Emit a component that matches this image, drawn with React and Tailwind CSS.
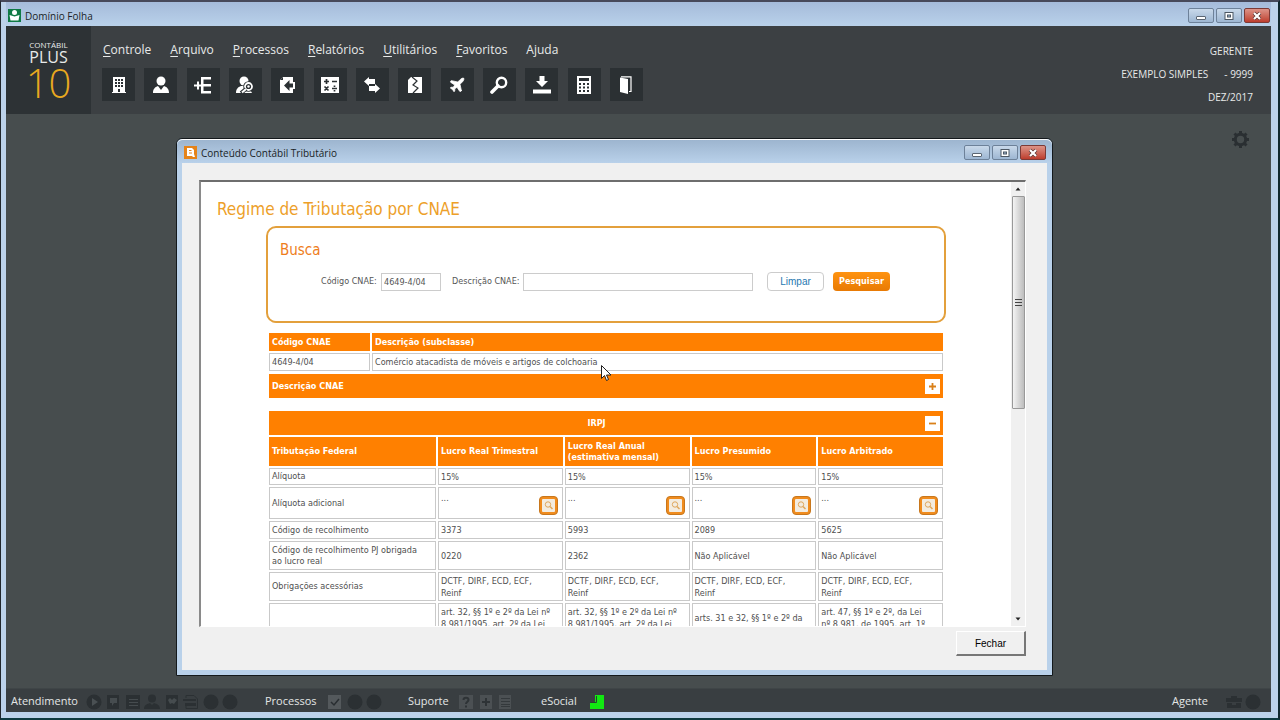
import React, { useState } from 'react';
import { Plane } from 'lucide-react';

const menus = [
    { label: 'Controle', key: true },
    { label: 'Arquivo', key: true },
    { label: 'Processos', key: true },
    { label: 'Relatórios', key: true },
    { label: 'Utilitários', key: true },
    { label: 'Favoritos', key: true },
    { label: 'Ajuda', key: false },
];

const DARK = '#2b3033';

// Toolbar glyphs, all on an 18x18 grid
const tools = [
    { name: 'Empresas', art: (
        <>
            <path d="M3 1h12v15h1v1H2v-1h1z" />
            <path fill={DARK} d="M5 3h2v2H5zM8 3h2v2H8zM11 3h2v2h-2zM5 6h2v2H5zM8 6h2v2H8zM11 6h2v2h-2zM5 9h2v2H5zM8 9h2v2H8zM11 9h2v2h-2zM8 13h2v3H8z" />
        </>
    ) },
    { name: 'Empregados', art: (
        <>
            <circle cx="9" cy="5" r="4.5" />
            <path d="M1 17c0-4 2-6 5-7l3 4 3-4c3 1 5 3 5 7z" />
        </>
    ) },
    { name: 'Lançamentos', art: (
        <path d="M7 1h10v2.500H9.500V8H17v2.500H9.500V15H17v2.500H7v-7H5v3H3v-3H0v-2h3v-3h2v3h2z" />
    ) },
    { name: 'Consulta de empregados', art: (
        <>
            <circle cx="8" cy="5" r="4.500" />
            <path d="M0 17c0-4 2-6 5-7h7l4 7z" />
            <circle cx="12.500" cy="10.500" r="3.500" fill="none" stroke={DARK} strokeWidth="3.500" />
            <circle cx="12.500" cy="10.500" r="3.500" fill={DARK} stroke="white" strokeWidth="1.800" />
            <path d="M10 13l-5 4" stroke={DARK} strokeWidth="4" />
            <path d="M10 13l-4 3.500" stroke="white" strokeWidth="2" />
            <circle cx="12.500" cy="10.500" r="1.200" />
        </>
    ) },
    { name: 'Importar', art: (
        <>
            <path d="M4 1h10v5h2v7h-2v4H1V4z" />
            <path fill={DARK} d="M1 4l3-3v3zM5 9.500l5.500-5.500v3.500H14v4h-3.500V15z" />
        </>
    ) },
    { name: 'Cálculo', art: (
        <>
            <path d="M0 1h18v16H0z" />
            <path stroke={DARK} strokeWidth="1.700" d="M3 5.500h5M5.500 3v5M11 5.500h5M3.500 10.500l4 4M7.500 10.500l-4 4M11 12.500h5M13.500 9.500v1.500M13.500 14v1.500" />
        </>
    ) },
    { name: 'Transferência', art: (
        <path d="M1 5.500L6 1v2h6v5H6v2zM17 12.500L12 17v-2H6v-5h6V8z" />
    ) },
    { name: 'Rescisão', art: (
        <>
            <path d="M5 1h11v16H2V4z" />
            <path fill="none" stroke={DARK} strokeWidth="1.200" d="M6 1l5 4-4 4 5 3-5 5" />
        </>
    ) },
    { name: 'Férias', art: <Plane size={18} fill="white" stroke="white" strokeWidth={1} /> },
    { name: 'Pesquisar', art: (
        <>
            <circle cx="11.500" cy="6.500" r="4.700" fill="none" stroke="white" strokeWidth="2.400" />
            <path d="M8 10l-6 6" stroke="white" strokeWidth="3.600" strokeLinecap="round" />
        </>
    ) },
    { name: 'Baixar', art: (
        <path d="M6.500 0h5v5H15l-6 6-6-6h3.500zM0 13.500h18v4H0z" />
    ) },
    { name: 'Calculadora', art: (
        <>
            <path d="M2 0h14v18H2z" />
            <path fill={DARK} d="M4 2h10v3H4zM4 7h2v2H4zM8 7h2v2H8zM12 7h2v2h-2zM4 10.500h2v2H4zM8 10.500h2v2H8zM12 10.500h2v2h-2zM4 14h2v2H4zM8 14h2v2H8zM12 14h2v2h-2z" />
        </>
    ) },
    { name: 'Sair', art: (
        <>
            <path d="M3 1.500l8 1.500v15l-8-2z" />
            <path fill="none" stroke="white" strokeWidth="1.200" d="M4 0.900h10v14.600h-2" />
        </>
    ) },
];

const columns = ['Lucro Real Trimestral', 'Lucro Real Anual\n(estimativa mensal)', 'Lucro Presumido', 'Lucro Arbitrado'];

const obligations = 'DCTF, DIRF, ECD, ECF,\nReinf';

const rows = [
    { label: 'Alíquota', height: 'h-[17px]', values: ['15%', '15%', '15%', '15%'] },
    { label: 'Alíquota adicional', height: 'h-8', detail: true, values: ['...', '...', '...', '...'] },
    { label: 'Código de recolhimento', height: 'h-[18px]', values: ['3373', '5993', '2089', '5625'] },
    { label: 'Código de recolhimento PJ obrigada\nao lucro real', height: 'h-[29px]', values: ['0220', '2362', 'Não Aplicável', 'Não Aplicável'] },
    { label: 'Obrigações acessórias', height: 'h-[29px]', values: [obligations, obligations, obligations, obligations] },
    { label: '', height: 'h-[30px]', values: ['art. 32, §§ 1º e 2º da Lei nº\n8.981/1995, art. 2º da Lei', 'art. 32, §§ 1º e 2º da Lei nº\n8.981/1995, art. 2º da Lei', 'arts. 31 e 32, §§ 1º e 2º da', 'art. 47, §§ 1º e 2º, da Lei\nnº 8.981, de 1995, art. 1º'] },
];

function WindowButtons() {
    const base = 'flex h-[15px] w-[26px] items-center justify-center rounded-[2px] border';
    return (
        <div className="flex gap-0.5">
            <button aria-label="Minimizar" className={`${base} border-[#6d8199] bg-gradient-to-b from-[#c9d9ea] to-[#9db6d2]`}>
                <svg width="10" height="10" viewBox="0 0 10 10"><rect x="0.500" y="5.500" width="9" height="3" rx="0.500" fill="white" stroke="#5b6673" /></svg>
            </button>
            <button aria-label="Maximizar" className={`${base} border-[#6d8199] bg-gradient-to-b from-[#c9d9ea] to-[#9db6d2]`}>
                <svg width="10" height="10" viewBox="0 0 10 10"><rect x="1" y="1.500" width="8" height="7" fill="white" stroke="#4d5864" /><rect x="3.500" y="4" width="3" height="2" fill="#9db6d2" stroke="#4d5864" /></svg>
            </button>
            <button aria-label="Fechar janela" className={`${base} border-[#7c3a36] bg-gradient-to-b from-[#dc9388] to-[#bd3c2d]`}>
                <svg width="10" height="10" viewBox="0 0 10 10"><path d="M2 2l6 6M8 2l-6 6" stroke="#5a3431" strokeWidth="3.600" /><path d="M2 2l6 6M8 2l-6 6" stroke="white" strokeWidth="2.200" /></svg>
            </button>
        </div>
    );
}

function Dot() {
    return <svg width="16" height="16" viewBox="0 0 16 16"><circle cx="8" cy="8" r="7.500" fill={DARK} /></svg>;
}

function StatusIcon({ children, fill = DARK }) {
    return <svg width="16" height="16" viewBox="0 0 16 16" fill={fill} stroke="none">{children}</svg>;
}

function StatusBar() {
    return (
        <footer className="flex h-6 shrink-0 items-center border-t border-[#3f4547] bg-[#393e41] pl-[5px] pr-[10px] pt-0.5 font-['Open_Sans',sans-serif] text-[11px] text-[#e4e6e6]">
            <span className="w-[75px]">Atendimento</span>
            <div className="mr-[27px] flex w-[152px] justify-between">
                <StatusIcon><circle cx="8" cy="8" r="7.500" /><path fill="#4a5053" d="M6 4l6 4-6 4z" /></StatusIcon>
                <StatusIcon><path d="M2 1h12v14H2z" /><path fill="#464c4f" d="M5 4h7v5H9l-2 3V9H5z" /></StatusIcon>
                <StatusIcon><path d="M1 1h14v14H1z" /><path stroke="#464c4f" d="M4 5.500h9M4 8.500h9M4 11.500h9" /></StatusIcon>
                <StatusIcon><circle cx="8" cy="4.500" r="4" /><path d="M0 15c0-4 3-5 6-6l2 2 2-2c3 1 6 2 6 6z" /></StatusIcon>
                <StatusIcon><path d="M2 1h12v14H2z" /><path fill="#464c4f" d="M4 6l2-2 2 2 2-2 3 2-3 4-2-1-2 1z" /></StatusIcon>
                <StatusIcon><path fill="none" stroke={DARK} d="M3 4V1.500h8L14.500 5v9.500H3V12" /><path d="M0 5h13v2H0zM2 9h11v3H2z" /></StatusIcon>
                <Dot />
                <Dot />
            </div>
            <span className="w-[62px]">Processos</span>
            <div className="mr-[26px] flex w-[55px] justify-between">
                <StatusIcon fill="#54595c"><path d="M1 1h13v14H1z" /><path fill="none" stroke="#292e31" strokeWidth="1.500" d="M4 8l3 3 5-6" /></StatusIcon>
                <Dot />
                <Dot />
            </div>
            <span className="w-[50px]">Suporte</span>
            <div className="mr-[28px] flex w-[55px] justify-between">
                <StatusIcon fill="#4b5053"><path d="M1 1h14v14H1z" /><path fill="none" stroke="#2e3336" strokeWidth="2" d="M5.500 6c0-3 5-3 5 0 0 1.500-2.500 2-2.500 4M8 11.500v2" /></StatusIcon>
                <StatusIcon fill="#4b5053"><path d="M2 1h12v14H2z" /><path stroke="#2e3336" strokeWidth="2" d="M4 8h8M8 4v8" /></StatusIcon>
                <StatusIcon fill="#4b5053"><path d="M2 1h12v14H2z" /><path stroke="#34393c" strokeWidth="1" d="M4 4.500h9M4 7.500h9M4 10.500h9M4 12.500h9" /></StatusIcon>
            </div>
            <span className="w-[48px]">eSocial</span>
            <StatusIcon fill="#12e812"><path d="M6 1h9v14H1V9h5z" /><path fill="none" stroke="#2a3f30" strokeWidth="1" d="M1.500 8.500h6V2" /></StatusIcon>
            <div className="ml-auto flex items-center">
                <span className="w-[54px]">Agente</span>
                <div className="flex gap-[3px]">
                    <StatusIcon><path d="M5 2h6v2h5v4H0V4h5zM1 9h5v2h4V9h5v5H1z" /></StatusIcon>
                    <Dot />
                </div>
            </div>
        </footer>
    );
}

function Header() {
    return (
        <header className="flex h-[88px] shrink-0 bg-[#3c4043] text-[#e8eaea]">
            <div className="flex w-[85px] flex-col items-center bg-[#2d3235] pt-[14px] font-['Open_Sans',sans-serif]">
                <span className="text-[8px] leading-[10px]">CONTÁBIL</span>
                <span className="text-[16px] leading-[14px]">PLUS</span>
                <span className="text-[40px] font-light leading-[38px] text-[#e9a91f]">10</span>
            </div>
            <div className="flex flex-col pl-[11px] pt-[14px]">
                <nav className="flex gap-[19px] pl-px font-['Open_Sans',sans-serif] text-[12px] leading-5">
                    {menus.map((m) => (
                        <button key={m.label}>
                            {m.key ? <span className="underline underline-offset-2">{m.label[0]}</span> : m.label[0]}
                            {m.label.slice(1)}
                        </button>
                    ))}
                </nav>
                <div className="mt-2 flex w-[541px] justify-between">
                    {tools.map((t) => (
                        <button key={t.name} aria-label={t.name} className="flex size-[33px] items-center justify-center bg-[#2b3033]">
                            <svg width="18" height="18" viewBox="0 0 18 18" fill="white">{t.art}</svg>
                        </button>
                    ))}
                </div>
            </div>
            <div className="ml-auto flex flex-col pr-[18px] pt-[14px] text-right font-['Open_Sans',sans-serif] text-[10px] leading-[23px]">
                <span>GERENTE</span>
                <span className="flex justify-end gap-4"><span>EXEMPLO SIMPLES</span><span>- 9999</span></span>
                <span>DEZ/2017</span>
            </div>
        </header>
    );
}

function SearchBox() {
    const [code, setCode] = useState('4649-4/04');
    const [desc, setDesc] = useState('');

    return (
        <form onSubmit={(e) => e.preventDefault()} className="mx-auto mt-[5px] h-[97px] w-[680px] rounded-[10px] border-2 border-[#e3a03c] px-3 pt-3">
            <h2 className="text-[15px] leading-5 text-[#ee7d1c]">Busca</h2>
            <div className="ml-[41px] mt-3 flex items-center text-[9px] text-[#555]">
                <label htmlFor="code" className="w-[60px] whitespace-nowrap">Código CNAE:</label>
                <input id="code" value={code} onChange={(e) => setCode(e.target.value)} className="h-[18px] w-[60px] border border-[#ccc] px-0.5" />
                <label htmlFor="desc" className="ml-[11px] w-[71px] whitespace-nowrap">Descrição CNAE:</label>
                <input id="desc" value={desc} onChange={(e) => setDesc(e.target.value)} className="h-[18px] w-[230px] border border-[#ccc] px-0.5" />
                <button type="button" onClick={() => { setCode(''); setDesc(''); }} className="ml-[14px] h-[19px] w-[57px] rounded-sm border border-[#ccc] bg-white font-['Liberation_Sans',sans-serif] text-[10px] text-[#1f78b0]">Limpar</button>
                <button type="submit" className="ml-[9px] h-[19px] w-[57px] rounded-sm bg-gradient-to-b from-[#ff9310] to-[#e87a04] font-bold text-white">Pesquisar</button>
            </div>
        </form>
    );
}

function ToggleButton({ open, label }) {
    return (
        <button aria-label={label} className="flex size-[15px] items-center justify-center bg-white">
            <svg width="9" height="9" viewBox="0 0 9 9" stroke="#d9801a" strokeWidth="1.800"><path d={open ? 'M1 4.500h7' : 'M1 4.500h7M4.500 1v7'} /></svg>
        </button>
    );
}

function DetailButton() {
    return (
        <button aria-label="Ver detalhes" className="flex size-[19px] items-center justify-center rounded-sm border border-[#c8771d] bg-[#f08c1e]">
            <svg width="13" height="13" viewBox="0 0 13 13">
                <rect width="13" height="13" rx="1" fill="#f3ece0" />
                <circle cx="6" cy="5.500" r="2.700" fill="none" stroke="#dfa75c" />
                <path d="M8 7.500l2.500 2.500" stroke="#dfa75c" strokeWidth="1.500" />
            </svg>
        </button>
    );
}

function Results() {
    const head = 'whitespace-pre-line bg-[#ff8000] px-[3px] py-0 text-left align-middle font-bold text-white';
    const cell = 'whitespace-pre-line border border-[#c9c9c9] px-0.5 py-0 align-middle';

    return (
        <div className="mx-auto mt-2 w-[678px] text-[9px] leading-[11px] text-[#4f4f4f]">
            <table className="w-full table-fixed border-separate border-spacing-0.5">
                <colgroup>
                    <col className="w-[101px]" />
                    <col />
                </colgroup>
                <thead>
                    <tr className="h-[18px]">
                        <th className={head}>Código CNAE</th>
                        <th className={head}>Descrição (subclasse)</th>
                    </tr>
                </thead>
                <tbody>
                    <tr className="h-[18px]">
                        <td className={cell}>4649-4/04</td>
                        <td className={cell}>Comércio atacadista de móveis e artigos de colchoaria</td>
                    </tr>
                </tbody>
            </table>

            <div className="mx-0.5 mt-px flex h-6 items-center justify-between bg-[#ff8000] px-[3px] font-bold text-white">
                <span>Descrição CNAE</span>
                <ToggleButton label="Expandir descrição" />
            </div>

            <div className="mx-0.5 mt-[13px] grid h-6 grid-cols-[1fr_auto_1fr] items-center bg-[#ff8000] pr-[3px] font-bold text-white">
                <span />
                <span className="pr-4">IRPJ</span>
                <div className="flex justify-end"><ToggleButton open label="Recolher IRPJ" /></div>
            </div>

            <table className="w-full table-fixed border-separate border-spacing-0.5">
                <colgroup>
                    <col className="w-[167px]" />
                    <col />
                    <col />
                    <col />
                    <col />
                </colgroup>
                <thead>
                    <tr className="h-[29px]">
                        <th className={head}>Tributação Federal</th>
                        {columns.map((c) => <th key={c} className={head}>{c}</th>)}
                    </tr>
                </thead>
                <tbody>
                    {rows.map((r, i) => (
                        <tr key={i} className={r.height}>
                            <td className={cell}>{r.label}</td>
                            {r.values.map((v, j) => (
                                <td key={j} className={`${cell} leading-3`}>
                                    {r.detail ? (
                                        <div className="flex h-[29px] justify-between pr-0.5 pt-[3px]">
                                            <span>{v}</span>
                                            <div className="self-end pb-[3px]"><DetailButton /></div>
                                        </div>
                                    ) : v}
                                </td>
                            ))}
                        </tr>
                    ))}
                </tbody>
            </table>
        </div>
    );
}

function ScrollBar() {
    return (
        <div className="flex w-[14px] shrink-0 flex-col items-center bg-[#f0f0f0]">
            <svg width="14" height="14" viewBox="0 0 14 14"><path d="M4.500 8.500L7 5.500l2.500 3z" fill="#222" /></svg>
            <div className="flex h-[213px] w-[13px] items-center justify-center rounded-[1px] border border-[#999] bg-gradient-to-r from-[#f4f4f4] to-[#bdbdbd]">
                <svg width="7" height="7" viewBox="0 0 7 7"><path d="M0 0.500h7M0 3.500h7M0 6.500h7" stroke="#444" /></svg>
            </div>
            <svg className="mt-auto" width="14" height="14" viewBox="0 0 14 14"><path d="M4.500 5.500L7 8.500l2.500-3z" fill="#222" /></svg>
        </div>
    );
}

function Dialog() {
    return (
        <section className="absolute bottom-3 left-[170px] right-[218px] top-6 flex flex-col rounded-t-md border border-[#14191c] bg-[#b9d1ea] px-[5px] pb-[5px]">
            <div className="-mx-[5px] flex h-6 shrink-0 items-center gap-1 rounded-t-md border-t border-white bg-gradient-to-b from-[#9db5cf] to-[#b9d1ea] pl-[7px] pr-[6px] pt-0.5">
                <svg width="13" height="13" viewBox="0 0 13 13">
                    <rect width="13" height="13" fill="#e5831a" />
                    <path d="M3 2h5l2 2v4l1 3H9L8 10H3z" fill="white" />
                    <path d="M5 4.500h2.500M5 7h3" stroke="#e5831a" />
                </svg>
                <span className="flex-1 font-['Open_Sans',sans-serif] text-[10px] leading-4 text-[#1a1f26]">Conteúdo Contábil Tributário</span>
                <WindowButtons />
            </div>

            <div className="flex min-h-0 flex-1 flex-col bg-[#f0f0f0] pb-[14px] pl-[17px] pr-[21px] pt-[17px]">
                <div className="flex min-h-0 flex-1 border-2 border-b border-r border-b-white border-l-[#8a8a8a] border-r-white border-t-[#6e6e6e] bg-white">
                    <div className="min-w-0 flex-1 overflow-hidden font-['DejaVu_Sans_Condensed','DejaVu_Sans',sans-serif]">
                        <h1 className="ml-4 mt-[15px] text-[17px] leading-6 text-[#eda029]">Regime de Tributação por CNAE</h1>
                        <SearchBox />
                        <Results />
                    </div>
                    <ScrollBar />
                </div>
                <div className="mt-1 flex justify-end">
                    <button className="h-[25px] w-[70px] border border-b-2 border-r-2 border-b-[#777] border-l-white border-r-[#777] border-t-white bg-[#f0f0f0] font-['Liberation_Sans',sans-serif] text-[10px] text-black">Fechar</button>
                </div>
            </div>
        </section>
    );
}

function App() {
    return (
        <div className="relative flex h-screen flex-col overflow-hidden border-b-2 border-l border-r-2 border-t-2 border-b-[#0e3a40] border-l-[#20262c] border-r-[#10282e] border-t-[#47495a] bg-[#bcd2ea] pb-[6px] pl-[5px] pr-[7px]">
            <div className="flex h-6 shrink-0 items-center gap-1 bg-gradient-to-b from-[#a5bbda] to-[#b9d1ea] pl-0.5 pr-px pt-[3px]">
                <svg width="13" height="13" viewBox="0 0 13 13">
                    <rect width="13" height="13" fill="#0f7a45" />
                    <circle cx="6.500" cy="3.500" r="2.500" fill="white" />
                    <path d="M1.500 6l5 1.500 5-1.500-1 5.500h-8z" fill="white" />
                </svg>
                <span className="flex-1 font-['Open_Sans',sans-serif] text-[10px] leading-4 text-[#1a1f26]">Domínio Folha</span>
                <WindowButtons />
            </div>

            <Header />

            <main className="relative min-h-0 flex-1 bg-[#474d4e]">
                <button aria-label="Configurações" className="absolute right-[21px] top-4">
                    <svg width="19" height="19" viewBox="0 0 19 19" fill="none" stroke="#2a2f32">
                        <circle cx="9.500" cy="9.500" r="5.200" strokeWidth="3" />
                        <path strokeWidth="3" d="M9.500 1v3M9.500 15v3M1 9.500h3M15 9.500h3M3.500 3.500l2 2M13.500 13.500l2 2M3.500 15.500l2-2M13.500 5.500l2-2" />
                    </svg>
                </button>
                <Dialog />
            </main>

            <StatusBar />

            {/* mouse pointer */}
            <svg className="absolute left-[600px] top-[363px]" width="11" height="17" viewBox="0 0 11 17">
                <path d="M0.500 0.500v13l3-3 2 5 2-1-2-4.500h4.500z" fill="white" stroke="#222" />
            </svg>
        </div>
    );
}

export default App;
